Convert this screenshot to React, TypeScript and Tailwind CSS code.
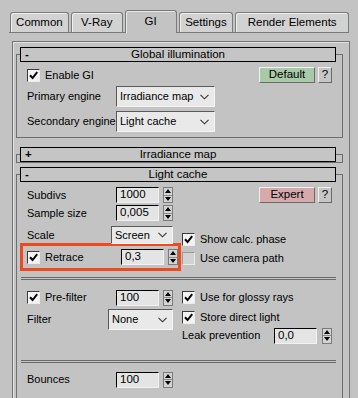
import React from 'react';

const Check = ({ on = true, dim = false }: { on?: boolean; dim?: boolean }) => (
  <span
    className={`w-[13px] h-[13px] shrink-0 flex items-center justify-center border border-t-[#3c3c3c] border-l-[#3c3c3c] border-r-[#ececec] border-b-[#ececec] ${
      dim ? 'bg-[#d2d2d2] border-t-[#9a9a9a] border-l-[#9a9a9a]' : 'bg-[#f4f4f4]'
    }`}
  >
    {on && (
      <svg width="9" height="9" viewBox="0 0 9 9">
        <path d="M1 4.2 L3.6 7 L8.2 1.2" stroke="#000" strokeWidth="2" fill="none" />
      </svg>
    )}
  </span>
);

const Arrows = () => (
  <div className="w-[10px] h-[16px] flex flex-col border border-[#7a7a7a] bg-[#d4d4d4]">
    <div className="flex-1 flex items-center justify-center border-b border-[#8a8a8a]">
      <svg width="6" height="4" viewBox="0 0 6 4">
        <path d="M0 4 L3 0 L6 4 Z" fill="#000" />
      </svg>
    </div>
    <div className="flex-1 flex items-center justify-center">
      <svg width="6" height="4" viewBox="0 0 6 4">
        <path d="M0 0 L3 4 L6 0 Z" fill="#000" />
      </svg>
    </div>
  </div>
);

const Spinner = ({ value, gap = 'ml-[4px]' }: { value: string; gap?: string }) => (
  <div className="flex items-center">
    <div className="w-[43px] h-[16px] flex items-center pl-[3px] bg-[#e4e4e4] border border-t-black border-l-black border-r-[#f2f2f2] border-b-[#f2f2f2] text-[11.5px]">
      {value}
    </div>
    <div className={gap}>
      <Arrows />
    </div>
  </div>
);

const Dropdown = ({ value, w, h }: { value: string; w: string; h: string }) => (
  <div
    className={`${w} ${h} flex items-center justify-between pl-[3px] pr-[5px] bg-[#e9e9e9] border border-t-[#5a5a5a] border-l-[#5a5a5a] border-r-[#f6f6f6] border-b-[#f6f6f6] text-[11px] whitespace-nowrap`}
  >
    <span>{value}</span>
    <svg width="9" height="6" viewBox="0 0 9 6">
      <path d="M0.5 0.8 L4.5 4.8 L8.5 0.8" stroke="#333" strokeWidth="1.1" fill="none" />
    </svg>
  </div>
);

const Header = ({ sign, title }: { sign: string; title: string }) => (
  <div className="relative z-10 -mt-[8px] ml-[3px] w-[316px] h-[15px] border border-black bg-[#c5c5c5] flex items-center text-[11.5px]">
    <span className="w-[14px] pl-[4px] font-bold leading-none">{sign}</span>
    <span className="flex-1 text-center -ml-[14px] leading-none">{title}</span>
  </div>
);

const CheckRow = ({ label, on = true, dim = false, cls }: { label: string; on?: boolean; dim?: boolean; cls: string }) => (
  <div className={`${cls} h-[13px] flex items-center whitespace-nowrap`}>
    <Check on={on} dim={dim} />
    <span className="ml-[5px]">{label}</span>
  </div>
);

const Separator = ({ cls }: { cls: string }) => (
  <div className={`${cls} ml-[4px] w-[315px] h-[3px] border-y border-[#6a6a6a]`} />
);

const tabs = [
  { name: 'Common', w: 'w-[59px]' },
  { name: 'V-Ray', w: 'w-[52px]' },
  { name: 'GI', w: 'w-[52px]', active: true },
  { name: 'Settings', w: 'w-[55px]' },
  { name: 'Render Elements', w: 'w-[114px]' },
];

export default function App() {
  return (
    <div className="w-[358px] h-[398px] overflow-hidden bg-[#c3c3c3] text-black text-[11px] whitespace-nowrap font-['Liberation_Sans',Arial,sans-serif]">
      {/* Tabs */}
      <div className="h-[33px] mx-[9px] pl-[1px] flex items-end gap-[2px] border-b border-[#7a7a7a]">
        {tabs.map((t) =>
          t.active ? (
            <div
              key={t.name}
              className={`${t.w} h-[23px] -mb-px flex items-center justify-center rounded-t-[3px] border border-b-0 border-[#7a7a7a] bg-[#c3c3c3] text-[11.5px] shadow-[inset_1px_1px_0_#e6e6e6]`}
            >
              {t.name}
            </div>
          ) : (
            <div
              key={t.name}
              className={`${t.w} h-[20px] flex items-center justify-center rounded-t-[3px] border border-b-0 border-[#7a7a7a] bg-[#d2d2d2] text-[11.5px] shadow-[inset_1px_1px_0_#efefef]`}
            >
              {t.name}
            </div>
          )
        )}
      </div>

      {/* Scroll frame */}
      <div className="mt-[8px] ml-[12px] w-[338px] h-[400px] border-l border-t border-r border-[#747474] shadow-[inset_1px_1px_0_#e2e2e2]">
        {/* Global illumination */}
        <div className="mt-[12px] ml-[3px] w-[327px] border border-[#6e6e6e] pb-[5px]">
          <Header sign="-" title="Global illumination" />
          <div className="mt-[5px] h-[16px] flex items-center pl-[10px] pr-[10px]">
            <Check />
            <span className="ml-[5px]">Enable GI</span>
            <div className="ml-auto w-[56px] h-[16px] flex items-center justify-center bg-[#a9caa9] border border-t-[#eef5ee] border-l-[#eef5ee] border-r-[#6a6a6a] border-b-[#6a6a6a] text-[11.5px]">
              Default
            </div>
            <div className="ml-[3px] w-[14px] h-[16px] flex items-center justify-center bg-[#c6c6c6] border border-t-[#f0f0f0] border-l-[#f0f0f0] border-r-[#6a6a6a] border-b-[#6a6a6a] text-[11.5px]">
              ?
            </div>
          </div>
          <div className="mt-[3px] h-[21px] flex items-center">
            <span className="pl-[10px] w-[99px]">Primary engine</span>
            <Dropdown value="Irradiance map" w="w-[99px]" h="h-[21px]" />
          </div>
          <div className="mt-[4px] h-[21px] flex items-center">
            <span className="pl-[10px] w-[99px]">Secondary engine</span>
            <Dropdown value="Light cache" w="w-[99px]" h="h-[21px]" />
          </div>
        </div>

        {/* Irradiance map (collapsed) */}
        <div className="mt-[16px] ml-[3px] w-[327px] border border-[#6e6e6e]">
          <Header sign="+" title="Irradiance map" />
        </div>

        {/* Light cache */}
        <div className="mt-[11px] ml-[3px] w-[327px] h-[260px] border border-[#6e6e6e]">
          <Header sign="-" title="Light cache" />
          <div className="mt-[5px] h-[16px] flex items-center pr-[10px]">
            <span className="pl-[10px] w-[99px]">Subdivs</span>
            <Spinner value="1000" />
            <div className="ml-auto w-[56px] h-[16px] flex items-center justify-center bg-[#d6a9ad] border border-t-[#f6eced] border-l-[#f6eced] border-r-[#6a6a6a] border-b-[#6a6a6a] text-[11.5px]">
              Expert
            </div>
            <div className="ml-[3px] w-[14px] h-[16px] flex items-center justify-center bg-[#c6c6c6] border border-t-[#f0f0f0] border-l-[#f0f0f0] border-r-[#6a6a6a] border-b-[#6a6a6a] text-[11.5px]">
              ?
            </div>
          </div>
          <div className="mt-[2px] h-[16px] flex items-center">
            <span className="pl-[10px] w-[99px]">Sample size</span>
            <Spinner value="0,005" />
          </div>

          <div className="flex">
            <div className="w-[165px] shrink-0">
              <div className="mt-[5px] h-[18px] flex items-center">
                <span className="pl-[10px] w-[94px]">Scale</span>
                <Dropdown value="Screen" w="w-[62px]" h="h-[18px]" />
              </div>
              <div className="-mt-[1px] ml-[3px] w-[161px] h-[28px] border-[3px] border-[#ee4a20] flex items-center pl-[4px]">
                <Check />
                <span className="ml-[5px] w-[76px]">Retrace</span>
                <Spinner value="0,3" />
              </div>
            </div>
            <div>
              <CheckRow cls="mt-[12px]" label="Show calc. phase" />
              <CheckRow cls="mt-[6px]" label="Use camera path" on={false} dim />
            </div>
          </div>

          <Separator cls="mt-[6px]" />

          <div className="flex">
            <div className="w-[165px] shrink-0">
              <div className="mt-[10px] h-[15px] flex items-center pl-[10px]">
                <Check />
                <span className="ml-[5px] w-[71px]">Pre-filter</span>
                <Spinner value="100" />
              </div>
              <div className="mt-[4px] h-[21px] flex items-center">
                <span className="pl-[10px] w-[91px]">Filter</span>
                <Dropdown value="None" w="w-[65px]" h="h-[21px]" />
              </div>
            </div>
            <div>
              <CheckRow cls="mt-[11px]" label="Use for glossy rays" />
              <CheckRow cls="mt-[7px]" label="Store direct light" />
              <div className="mt-[4px] h-[15px] flex items-center">
                <span className="w-[92px]">Leak prevention</span>
                <Spinner value="0,0" gap="ml-[5px]" />
              </div>
            </div>
          </div>

          <Separator cls="mt-[17px]" />

          <div className="mt-[9px] h-[15px] flex items-center">
            <span className="pl-[10px] w-[99px]">Bounces</span>
            <Spinner value="100" />
          </div>
        </div>
      </div>
    </div>
  );
}
